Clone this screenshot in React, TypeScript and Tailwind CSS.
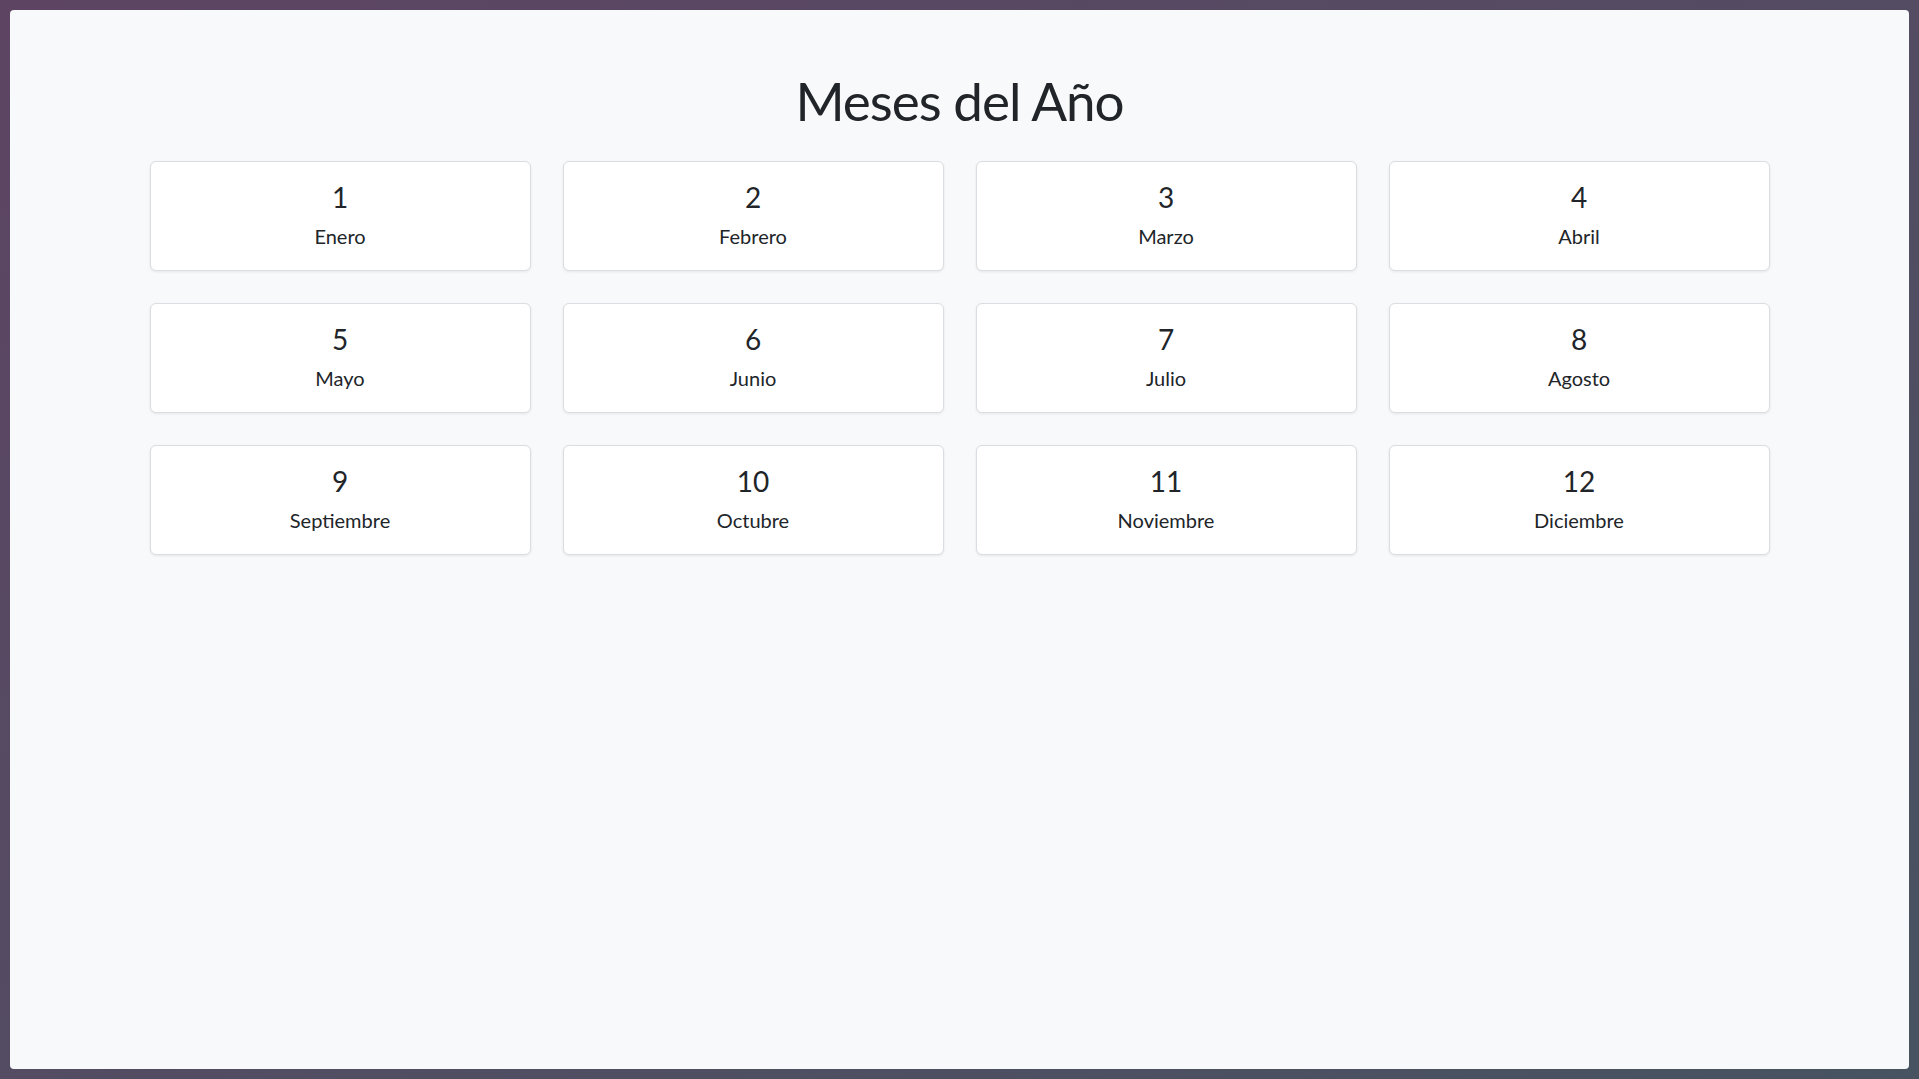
const months = [
  "Enero",
  "Febrero",
  "Marzo",
  "Abril",
  "Mayo",
  "Junio",
  "Julio",
  "Agosto",
  "Septiembre",
  "Octubre",
  "Noviembre",
  "Diciembre",
];

export default function App() {
  return (
    <div className="h-screen p-[10px] bg-gradient-to-br from-[#5d4463] to-[#475361]">
      <div
        className="h-full rounded-[4px] bg-[#f8f9fa] text-[#212529] pt-[59px]"
        style={{ fontFamily: 'Lato, "Noto Sans", sans-serif' }}
      >
        <h1 className="text-center text-[53px] leading-[1.2] font-normal tracking-[-1px]">Meses del Año</h1>
        <div className="mx-auto mt-[28px] grid max-w-[1620px] grid-cols-4 gap-x-[32px] gap-y-[32px]">
          {months.map((name, i) => (
            <div
              key={name}
              className="flex h-[110px] flex-col items-center rounded-[6px] border border-[#dadde1] bg-white pt-[19px] shadow-[0_1px_3px_rgba(0,0,0,0.08)]"
            >
              <span className="text-[28px] leading-[1.2]">{i + 1}</span>
              <span className="mt-[7px] text-[20px] leading-[1.5]">{name}</span>
            </div>
          ))}
        </div>
      </div>
    </div>
  );
}
